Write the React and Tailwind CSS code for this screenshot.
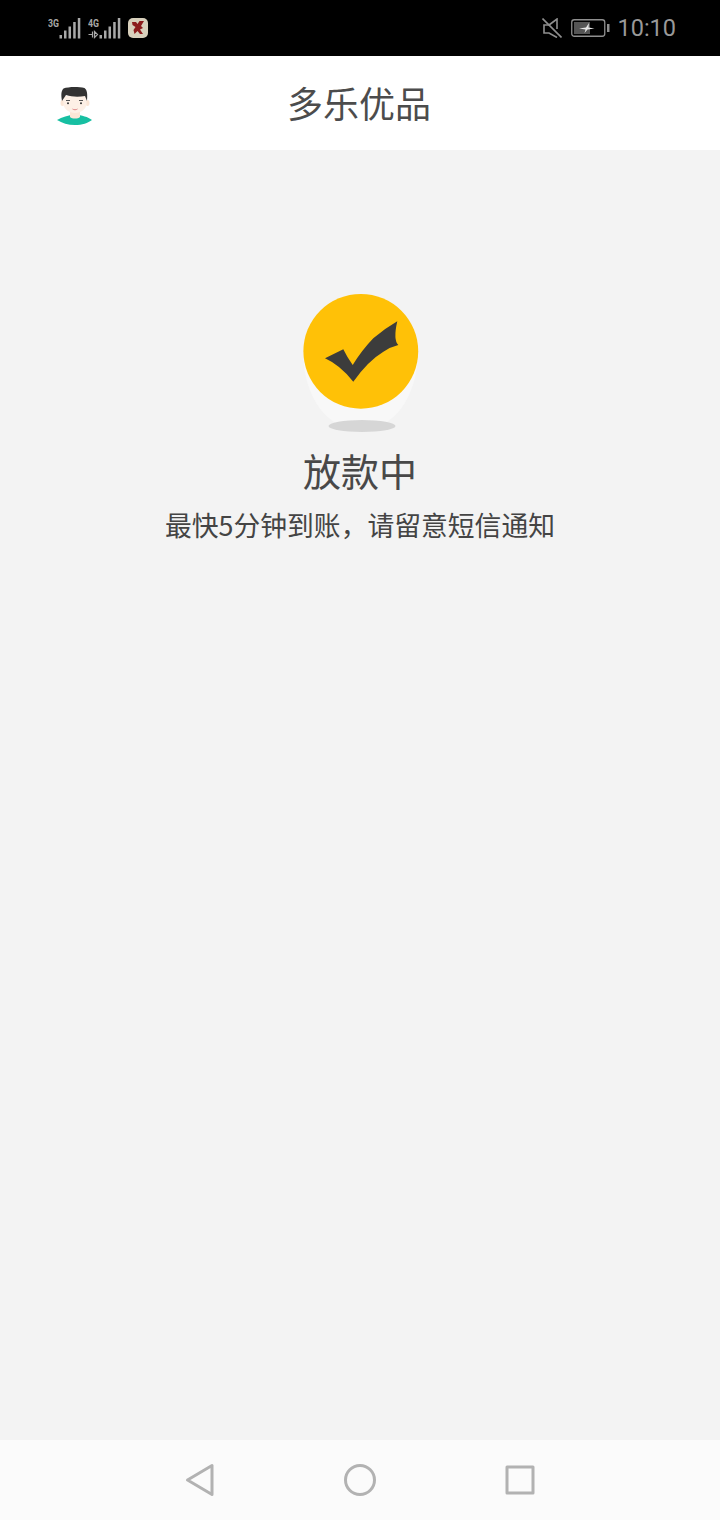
const cjk = 'font-["Noto_Sans_CJK_SC","Noto_Sans",sans-serif]';

// Signal bars with network label
const Signal = ({ label, arrows }) => (
    <svg width="33" height="22" viewBox="0 0 33 22" className="block">
        <text x="0" y="10" fontSize="10.500" fontWeight="700" fill="#a8a8a8" fontFamily="Roboto, sans-serif" textLength="11" lengthAdjust="spacingAndGlyphs">{label}</text>
        {arrows && <path d="M0.500 17.500h3.500M4.500 14.500v6M6.500 14.500v6l3-3z" stroke="#a8a8a8" strokeWidth="1.200" fill="none" />}
        <rect x="11.500" y="18" width="2.500" height="3.500" fill="#a8a8a8" />
        <rect x="16" y="13.500" width="2.500" height="8" fill="#a8a8a8" />
        <rect x="20.500" y="9.500" width="2.500" height="12" fill="#a8a8a8" />
        <rect x="25.200" y="5" width="2.500" height="16.500" fill="#a8a8a8" />
        <rect x="29.800" y="1" width="2.500" height="20.500" fill="#a8a8a8" />
    </svg>
);

const StatusBar = () => (
    <div className="h-14 bg-black flex items-center justify-between pl-12 pr-11">
        <div className="flex items-center gap-[7px]">
            <Signal label="3G" />
            <Signal label="4G" arrows />
            <svg width="20" height="20" viewBox="0 0 20 20" className="block">
                <rect x="0" y="0" width="20" height="20" rx="5" fill="#d8d0bc" />
                <path d="M4 4h4l1.500 2 2-3h4.500l-3 5 2 2-3 1.500 3 4.500h-3l-2.500-3-3 3-1-4 2-3-3-2z" fill="#8c1c1c" />
            </svg>
        </div>
        <div className="flex items-center">
            <svg width="20" height="20" viewBox="0 0 20 20" className="block mr-[9px]" fill="none" stroke="#8f8f8f" strokeWidth="1.600">
                <path d="M0.500 0.500l19 19" />
                <path d="M7 7H2v8h5l8 4.500M7 7l8-6v10" />
            </svg>
            <svg width="39" height="20" viewBox="0 0 39 20" className="block mr-[7px]">
                <rect x="0.750" y="1.750" width="33" height="16.500" rx="2.500" fill="none" stroke="#8f8f8f" strokeWidth="1.300" />
                <rect x="3" y="4" width="16" height="12" fill="#555" />
                <path d="M8 10.500l7-1 3-4.500-.5 4.500 6 1-7 1-3 3.500 1-3.500z" fill="#e6e6e6" />
                <rect x="36" y="6" width="2.500" height="8" fill="#8f8f8f" />
            </svg>
            <span className='text-[23.500px] leading-none mt-0.5 text-[#999] font-["Roboto",sans-serif]'>10:10</span>
        </div>
    </div>
);

const Avatar = () => (
    <svg width="40" height="42" viewBox="0 0 40 42" className="block">
        <path d="M3 34c5-3 11-5 18-5s13 2 17 5c-4 3-10 5-17 5s-13-2-18-5z" fill="#17bfa2" />
        <path d="M16 22h10v9c-2 2-8 2-10 0z" fill="#fbe6d6" />
        <ellipse cx="8.500" cy="17" rx="2" ry="3" fill="#fbe6d6" />
        <ellipse cx="33.500" cy="17" rx="2" ry="3" fill="#fbe6d6" />
        <path d="M9.500 10h23v8c0 5-6 9-11.500 9S9.500 23 9.500 18z" fill="#fdf0e6" />
        <path d="M8 15c-1-6-1-10 1.500-12.500 5-2 15-2 21-.5 3 2 3 7 2.500 13l-2-5c-6 1-13 1-19-1z" fill="#333" />
        <path d="M12 14.500h4M25 14.500h4" stroke="#555" strokeWidth="1" />
        <circle cx="14" cy="17.300" r="1" fill="#333" />
        <circle cx="27" cy="17.300" r="1" fill="#333" />
        <path d="M18.500 23c1.500 1 3.500 1 5 0" stroke="#d88" strokeWidth="1" fill="none" />
    </svg>
);

const Header = () => (
    <div className="relative h-[94px] bg-white flex items-center justify-center pb-0.5 pr-0.5">
        <div className="absolute left-[54px] top-[30px]">
            <Avatar />
        </div>
        <span className={`${cjk} text-[36px] leading-none text-[#4c4c4c]`}>多乐优品</span>
    </div>
);

// Yellow check badge with the pale egg behind it and the floor shadow
const Badge = () => (
    <svg width="160" height="160" viewBox="280 280 160 160" className="block">
        <path d="M303.500 360c2 35 22 70 57 70s55-35 57-70z" fill="#f8f8f8" />
        <ellipse cx="362" cy="426" rx="33.500" ry="6" fill="#d6d6d6" />
        <circle cx="360.800" cy="351.300" r="57.400" fill="#ffc107" />
        <path d="M397.300 321.300Q384 329 373.300 338.300Q362 350 352.700 365Q347 357 343.300 349.300L325 358.300Q340 365 353.300 381.700Q368 361 383 352Q390 347 398.300 345Q393 340 397.300 321.300z" fill="#3c3c3c" />
    </svg>
);

const NavBar = () => (
    <div className="h-20 bg-[#fbfbfb] flex items-center justify-center gap-[127px]">
        <svg width="32" height="36" viewBox="0 0 32 36" className="block" fill="none" stroke="#b2b2b2" strokeWidth="3" strokeLinejoin="round">
            <path d="M3.500 18L28 3.500v29z" />
        </svg>
        <svg width="34" height="34" viewBox="0 0 34 34" className="block" fill="none" stroke="#b2b2b2" strokeWidth="3">
            <circle cx="17" cy="17" r="14.500" />
        </svg>
        <svg width="32" height="32" viewBox="0 0 32 32" className="block" fill="none" stroke="#b2b2b2" strokeWidth="3" strokeLinejoin="round">
            <rect x="3" y="3" width="26" height="26" />
        </svg>
    </div>
);

export default function App() {
    return (
        <div className="w-[720px] h-[1520px] flex flex-col bg-[#f3f3f3] overflow-hidden">
            <StatusBar />
            <Header />
            <div className="flex-1 flex flex-col items-center pt-[130px]">
                <Badge />
                <div className={`${cjk} text-[38px] leading-[54px] mt-[3px] text-[#484848]`}>放款中</div>
                <div className={`${cjk} text-[26.800px] leading-9 mt-2.5 text-[#444]`}>最快5分钟到账，请留意短信通知</div>
            </div>
            <NavBar />
        </div>
    );
}
